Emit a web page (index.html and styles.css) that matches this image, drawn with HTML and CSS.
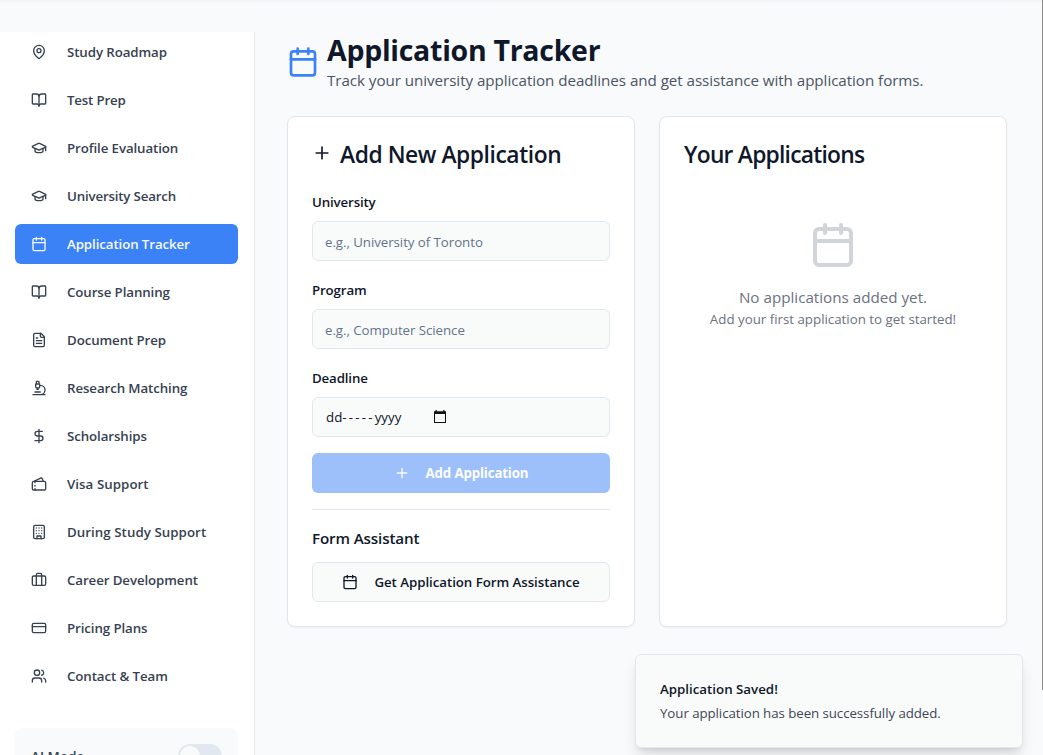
FILE: index.html
```html
<!DOCTYPE html>
<html lang="en">
<head>
<meta charset="utf-8">
<title>Application Tracker</title>
<link rel="stylesheet" href="styles.css">
</head>
<body>
<svg class="sprite" aria-hidden="true">
  <symbol id="pin" viewBox="0 0 24 24"><path d="M20 10c0 6-8 12-8 12s-8-6-8-12a8 8 0 0 1 16 0Z"/><circle cx="12" cy="10" r="3"/></symbol>
  <symbol id="book" viewBox="0 0 24 24"><path d="M12 7v14"/><path d="M3 18a1 1 0 0 1-1-1V4a1 1 0 0 1 1-1h5a4 4 0 0 1 4 4 4 4 0 0 1 4-4h5a1 1 0 0 1 1 1v13a1 1 0 0 1-1 1h-6a3 3 0 0 0-3 3 3 3 0 0 0-3-3z"/></symbol>
  <symbol id="cap" viewBox="0 0 24 24"><path d="M21.42 10.922a1 1 0 0 0-.019-1.838L12.83 5.18a2 2 0 0 0-1.66 0L2.6 9.08a1 1 0 0 0 0 1.832l8.57 3.908a2 2 0 0 0 1.66 0z"/><path d="M22 10v6"/><path d="M6 12.5V16a6 3 0 0 0 12 0v-3.500"/></symbol>
  <symbol id="calendar" viewBox="0 0 24 24"><path d="M8 2v4M16 2v4"/><rect width="18" height="18" x="3" y="4" rx="2"/><path d="M3 10h18"/></symbol>
  <symbol id="file" viewBox="0 0 24 24"><path d="M15 2H6a2 2 0 0 0-2 2v16a2 2 0 0 0 2 2h12a2 2 0 0 0 2-2V7Z"/><path d="M14 2v4a2 2 0 0 0 2 2h4M10 9H8M16 13H8M16 17H8"/></symbol>
  <symbol id="microscope" viewBox="0 0 24 24"><path d="M6 18h8M3 22h18M14 22a7 7 0 1 0 0-14h-1M9 14h2M9 12a2 2 0 0 1-2-2V6h6v4a2 2 0 0 1-2 2ZM12 6V3a1 1 0 0 0-1-1H9a1 1 0 0 0-1 1v3"/></symbol>
  <symbol id="dollar" viewBox="0 0 24 24"><path d="M12 2v20M17 5H9.500a3.500 3.500 0 0 0 0 7h5a3.500 3.500 0 0 1 0 7H6"/></symbol>
  <symbol id="tickets" viewBox="0 0 24 24"><path d="m4.500 8 10.580-5.060a1 1 0 0 1 1.342.488L18.500 8M6 10V8M6 14v1M6 19v2"/><rect x="2" y="8" width="20" height="13" rx="2"/></symbol>
  <symbol id="building" viewBox="0 0 24 24"><rect width="16" height="20" x="4" y="2" rx="2"/><path d="M9 22v-4h6v4M8 6h.01M16 6h.01M12 6h.01M12 10h.01M12 14h.01M16 10h.01M16 14h.01M8 10h.01M8 14h.01"/></symbol>
  <symbol id="luggage" viewBox="0 0 24 24"><path d="M16 20V4a2 2 0 0 0-2-2h-4a2 2 0 0 0-2 2v16"/><rect width="20" height="14" x="2" y="6" rx="2"/></symbol>
  <symbol id="card" viewBox="0 0 24 24"><rect width="20" height="14" x="2" y="5" rx="2"/><path d="M2 10h20"/></symbol>
  <symbol id="users" viewBox="0 0 24 24"><path d="M16 21v-2a4 4 0 0 0-4-4H6a4 4 0 0 0-4 4v2"/><circle cx="9" cy="7" r="4"/><path d="M22 21v-2a4 4 0 0 0-3-3.870M16 3.130a4 4 0 0 1 0 7.750"/></symbol>
  <symbol id="plus" viewBox="0 0 24 24"><path d="M5 12h14M12 5v14"/></symbol>
</svg>
<div class="app">
  <aside class="sidebar">
    <nav class="nav">
      <a class="nav-item"><svg class="icon"><use href="#pin"/></svg><span>Study Roadmap</span></a>
      <a class="nav-item"><svg class="icon"><use href="#book"/></svg><span class="snug">Test Prep</span></a>
      <a class="nav-item"><svg class="icon"><use href="#cap"/></svg><span>Profile Evaluation</span></a>
      <a class="nav-item"><svg class="icon"><use href="#cap"/></svg><span class="snug">University Search</span></a>
      <a class="nav-item active"><svg class="icon"><use href="#calendar"/></svg><span>Application Tracker</span></a>
      <a class="nav-item"><svg class="icon"><use href="#book"/></svg><span>Course Planning</span></a>
      <a class="nav-item"><svg class="icon"><use href="#file"/></svg><span>Document Prep</span></a>
      <a class="nav-item"><svg class="icon"><use href="#microscope"/></svg><span>Research Matching</span></a>
      <a class="nav-item"><svg class="icon"><use href="#dollar"/></svg><span>Scholarships</span></a>
      <a class="nav-item"><svg class="icon"><use href="#tickets"/></svg><span class="roomy">Visa Support</span></a>
      <a class="nav-item"><svg class="icon"><use href="#building"/></svg><span class="roomy">During Study Support</span></a>
      <a class="nav-item"><svg class="icon"><use href="#luggage"/></svg><span>Career Development</span></a>
      <a class="nav-item"><svg class="icon"><use href="#card"/></svg><span>Pricing Plans</span></a>
      <a class="nav-item"><svg class="icon"><use href="#users"/></svg><span>Contact &amp; Team</span></a>
    </nav>
    <div class="mode"><span class="mode-label">AI Mode</span><span class="switch"><span class="knob"></span></span></div>
  </aside>
  <main class="main">
    <header class="page-head">
      <svg class="icon head-icon"><use href="#calendar"/></svg>
      <div>
        <h1 class="title">Application Tracker</h1>
        <p class="subtitle">Track your university application deadlines and get assistance with application forms.</p>
      </div>
    </header>
    <div class="cards">
      <section class="card">
        <h2 class="card-title title-add"><svg class="icon title-icon"><use href="#plus"/></svg><span>Add New Application</span></h2>
        <div class="fields">
          <div class="field"><label class="label">University</label><div class="input hint">e.g., University of Toronto</div></div>
          <div class="field"><label class="label">Program</label><div class="input hint">e.g., Computer Science</div></div>
          <div class="field"><label class="label">Deadline</label><div class="input date"><span class="date-text">dd<span class="dashes">-----</span>yyyy</span><svg class="date-icon" viewBox="0 0 12 13"><path fill="#111" d="M0 1.200h1.500V0h1.300v1.200h6.400V0h1.300v1.200H12V13H0zM1 4v8h10V4z"/></svg></div></div>
          <button class="btn primary"><svg class="icon"><use href="#plus"/></svg><span>Add Application</span></button>
        </div>
        <div class="assist">
          <h3 class="assist-title">Form Assistant</h3>
          <button class="btn outline"><svg class="icon"><use href="#calendar"/></svg><span>Get Application Form Assistance</span></button>
        </div>
      </section>
      <section class="card">
        <h2 class="card-title title-list"><span>Your Applications</span></h2>
        <div class="empty">
          <svg class="icon empty-icon"><use href="#calendar"/></svg>
          <p class="empty-main">No applications added yet.</p>
          <p class="empty-sub">Add your first application to get started!</p>
        </div>
      </section>
    </div>
  </main>
</div>
<div class="toast"><div class="toast-title">Application Saved!</div><div class="toast-text">Your application has been successfully added.</div></div>
<div class="scroll-edge"></div>
</body>
</html>
```

FILE: styles.css
```css
* { box-sizing: border-box; margin: 0; padding: 0; }
body {
  position: relative;
  height: 755px;
  overflow: hidden;
  background: #f9fafc;
  color: #0f172a;
  font-family: "Open Sans", "Noto Sans", sans-serif;
  font-size: 13.3px;
  line-height: 20px;
}
.sprite { display: none; }
.icon {
  width: 16px;
  height: 16px;
  flex: none;
  fill: none;
  stroke: currentColor;
  stroke-width: 2;
  stroke-linecap: round;
  stroke-linejoin: round;
}
.app {
  display: flex;
  height: 755px;
  padding-top: 32px;
  background: linear-gradient(#f0f2f5, #f9fafc 3px);
}
.sidebar {
  width: 255px;
  flex: none;
  padding: 0 16px 0 15px;
  background: #fff;
  border-right: 1px solid #e5e7eb;
}
.nav { display: flex; flex-direction: column; gap: 8px; }
.nav-item {
  display: flex;
  align-items: center;
  gap: 20px;
  height: 40px;
  padding: 0 16px;
  border-radius: 6px;
  color: #374151;
  font-weight: 600;
  letter-spacing: -0.1px;
}
.snug { letter-spacing: -0.18px; }
.roomy { letter-spacing: 0.05px; }
.active { background: #3b82f6; color: #f8fafc; }
.mode {
  display: flex;
  justify-content: space-between;
  margin-top: 32px;
  padding: 16px 16px 20px;
  height: 56px;
  border-radius: 8px;
  background: #f9fafb;
  color: #374151;
  font-weight: 600;
}
.mode-label { padding-top: 2px; letter-spacing: 0.1px; }
.switch { width: 44px; height: 24px; padding: 2px; border-radius: 12px; background: #e2e8f0; }
.knob { display: block; width: 20px; height: 20px; border-radius: 50%; background: #f9fbfa; }
.main { flex: 1; padding: 0 36px 0 32px; }
.page-head { display: flex; align-items: center; gap: 8px; height: 60px; }
.head-icon { width: 32px; height: 32px; color: #3b82f6; }
.title { font-size: 28.500px; line-height: 36px; font-weight: 700; letter-spacing: -0.28px; }
.subtitle { font-size: 15.200px; line-height: 24px; color: #4b5563; letter-spacing: -0.06px; }
.cards { display: grid; grid-template-columns: 1fr 1fr; gap: 24px; margin-top: 24px; height: 511px; }
.card {
  padding: 24px;
  background: #fff;
  border: 1px solid #e2e8f0;
  border-radius: 8px;
  box-shadow: 0 1px 2px rgba(0, 0, 0, .05);
}
.card-title { display: flex; align-items: center; gap: 8px; height: 27px; font-size: 22.800px; line-height: 24px; font-weight: 600; }
.title-add { letter-spacing: -0.43px; }
.title-list { letter-spacing: -0.76px; }
.title-icon { width: 20px; height: 20px; margin-bottom: 3px; }
.fields { display: flex; flex-direction: column; gap: 16px; margin-top: 21px; }
.field { display: flex; flex-direction: column; gap: 8px; }
.label { height: 24px; line-height: 26px; font-weight: 600; letter-spacing: -0.15px; }
.input {
  display: flex;
  align-items: center;
  height: 40px;
  padding: 2px 12px 0;
  background: #f9fbfa;
  border: 1px solid #e2e8f0;
  border-radius: 6px;
}
.hint { color: #64748b; letter-spacing: -0.06px; }
.date { padding-top: 0; }
.date-text { display: flex; width: 109px; padding-left: 1px; }
.dashes { letter-spacing: 2.200px; }
.date-icon { width: 12px; height: 13px; margin-bottom: 1px; }
.btn {
  display: flex;
  align-items: center;
  justify-content: center;
  gap: 16px;
  width: 100%;
  height: 40px;
  border: 0;
  border-radius: 6px;
  font: inherit;
  font-weight: 600;
}
.primary { background: #9dc0fb; color: #fcfdff; font-weight: 700; letter-spacing: -0.16px; }
.outline { background: #f9fbfa; border: 1px solid #e2e8f0; color: #0f172a; letter-spacing: -0.05px; }
.assist { margin-top: 16px; padding-top: 16px; border-top: 1px solid #e2e8f0; }
.assist-title { font-size: 15.200px; line-height: 24px; font-weight: 600; letter-spacing: -0.14px; margin-bottom: 12px; }
.empty { display: flex; flex-direction: column; align-items: center; margin-top: 53px; }
.empty-icon { width: 48px; height: 48px; color: #d1d5db; margin-bottom: 16px; }
.empty-main { color: #6b7280; font-size: 15.200px; line-height: 24px; }
.empty-sub { color: #6b7280; }
.toast {
  position: absolute;
  left: 635px;
  top: 654px;
  width: 388px;
  height: 94px;
  padding: 24px;
  background: #f9fbfa;
  border: 1px solid #e2e8f0;
  border-radius: 6px;
  box-shadow: 0 10px 15px -3px rgba(0, 0, 0, .13), 0 4px 6px -4px rgba(0, 0, 0, .15);
}
.toast-title { font-weight: 600; margin-bottom: 4px; }
.toast-text { color: #3f4757; letter-spacing: -0.07px; }
.scroll-edge { position: absolute; right: 0; top: 0; width: 1px; height: 690px; background: #8b8b8b; }
```
